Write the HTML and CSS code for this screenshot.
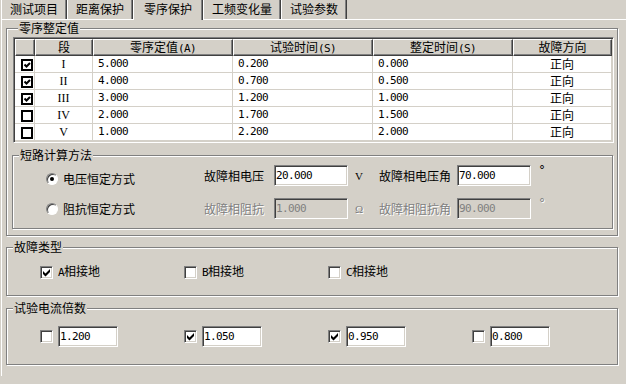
FILE: index.html
```html
<!DOCTYPE html>
<html lang="zh-CN">
<head>
    <meta charset="UTF-8">
    <title>零序保护</title>
    <link rel="stylesheet" href="styles.css">
</head>
<body>
<div class="window">
    <div class="tabs">
        <div class="tab">测试项目</div>
        <div class="tab">距离保护</div>
        <div class="tab active">零序保护</div>
        <div class="tab">工频变化量</div>
        <div class="tab">试验参数</div>
    </div>

    <div class="page">
        <div class="group zero">
            <div class="group-title">零序整定值</div>
            <div class="settings">
                <div class="th"></div>
                <div class="th">段</div>
                <div class="th">零序定值<span class="lat">(A)</span></div>
                <div class="th">试验时间<span class="lat">(S)</span></div>
                <div class="th">整定时间<span class="lat">(S)</span></div>
                <div class="th">故障方向</div>

                <div class="td c-chk"><svg class="flat" viewBox="0 0 12 12"><rect x="1" y="1" width="10" height="10"/><path d="M3.5 5.5 L5.5 7.5 L9 4"/></svg></div>
                <div class="td roman">I</div>
                <div class="td num">5.000</div>
                <div class="td num">0.200</div>
                <div class="td num">0.000</div>
                <div class="td dir">正向</div>

                <div class="td c-chk"><svg class="flat" viewBox="0 0 12 12"><rect x="1" y="1" width="10" height="10"/><path d="M3.5 5.5 L5.5 7.5 L9 4"/></svg></div>
                <div class="td roman">II</div>
                <div class="td num">4.000</div>
                <div class="td num">0.700</div>
                <div class="td num">0.500</div>
                <div class="td dir">正向</div>

                <div class="td c-chk"><svg class="flat" viewBox="0 0 12 12"><rect x="1" y="1" width="10" height="10"/><path d="M3.5 5.5 L5.5 7.5 L9 4"/></svg></div>
                <div class="td roman">III</div>
                <div class="td num">3.000</div>
                <div class="td num">1.200</div>
                <div class="td num">1.000</div>
                <div class="td dir">正向</div>

                <div class="td c-chk"><svg class="flat" viewBox="0 0 12 12"><rect x="1" y="1" width="10" height="10"/></svg></div>
                <div class="td roman">IV</div>
                <div class="td num">2.000</div>
                <div class="td num">1.700</div>
                <div class="td num">1.500</div>
                <div class="td dir">正向</div>

                <div class="td c-chk"><svg class="flat" viewBox="0 0 12 12"><rect x="1" y="1" width="10" height="10"/></svg></div>
                <div class="td roman">V</div>
                <div class="td num">1.000</div>
                <div class="td num">2.200</div>
                <div class="td num">2.000</div>
                <div class="td dir">正向</div>
            </div>

            <div class="group method">
                <div class="group-title">短路计算方法</div>
                <div class="method-body">
                    <div class="radios">
                        <div class="radio-item"><span class="radio on"></span>电压恒定方式</div>
                        <div class="radio-item"><span class="radio"></span>阻抗恒定方式</div>
                    </div>
                    <div class="params">
                        <div class="label">故障相电压</div>
                        <div class="input">20.000</div>
                        <div class="unit">V</div>
                        <div class="label">故障相电压角</div>
                        <div class="input">70.000</div>
                        <div class="deg">°</div>

                        <div class="label disabled">故障相阻抗</div>
                        <div class="input disabled">1.000</div>
                        <div class="unit disabled">Ω</div>
                        <div class="label disabled">故障相阻抗角</div>
                        <div class="input disabled">90.000</div>
                        <div class="deg disabled">°</div>
                    </div>
                </div>
            </div>
        </div>

        <div class="group fault">
            <div class="group-title">故障类型</div>
            <div class="fault-items">
                <div class="item"><span class="cb"><svg viewBox="0 0 9 9"><polygon points="1,3 3.5,5.5 8,1 8,4 3.5,8.5 1,6"/></svg></span><span><span class="lat">A</span>相接地</span></div>
                <div class="item"><span class="cb"></span><span><span class="lat">B</span>相接地</span></div>
                <div class="item"><span class="cb"></span><span><span class="lat">C</span>相接地</span></div>
            </div>
        </div>

        <div class="group mult">
            <div class="group-title">试验电流倍数</div>
            <div class="mult-items">
                <div class="item"><span class="cb"></span><div class="input short">1.200</div></div>
                <div class="item"><span class="cb"><svg viewBox="0 0 9 9"><polygon points="1,3 3.5,5.5 8,1 8,4 3.5,8.5 1,6"/></svg></span><div class="input short">1.050</div></div>
                <div class="item"><span class="cb"><svg viewBox="0 0 9 9"><polygon points="1,3 3.5,5.5 8,1 8,4 3.5,8.5 1,6"/></svg></span><div class="input short">0.950</div></div>
                <div class="item"><span class="cb"></span><div class="input short">0.800</div></div>
            </div>
        </div>
    </div>
</div>
</body>
</html>
```

FILE: styles.css
```css
body {
    margin: 0;
    width: 626px;
    height: 384px;
    overflow: hidden;
    background-color: #d4d0c8;
    color: #000;
    font-family: "Noto Sans CJK SC", sans-serif;
    font-size: 12px;
}
.window {
    padding-left: 1px;
}

/* tab strip */
.tabs {
    display: flex;
    height: 19px;
}
.tab {
    padding: 0 8px;
    line-height: 18px;
    border-left: 1px solid #fff;
    border-right: 1px solid #404040;
    box-shadow: inset -1px 0 #808080;
}
.tab.active {
    position: relative;
    z-index: 1;
    height: 20px;
    margin-bottom: -1px;
    padding: 0 10px;
    background-color: #d4d0c8;
}
.page {
    height: 357px;
    box-sizing: border-box;
    padding: 8px 0 0 4px;
    border-top: 1px solid #fff;
    border-left: 1px solid #fff;
}

/* etched group boxes */
.group {
    box-sizing: border-box;
    border: 1px solid #808080;
    box-shadow: inset 1px 1px #fff, 1px 1px #fff;
}
.group-title {
    width: max-content;
    margin: -8px 0 0 6px;
    padding: 0 1px;
    line-height: 14px;
    background-color: #d4d0c8;
}
.lat {
    font-family: "DejaVu Sans Mono", monospace;
    font-size: 11px;
    letter-spacing: -0.6px;
}
.zero {
    width: 612px;
    padding: 0 0 6px 5px;
}

/* settings grid */
.settings {
    display: grid;
    grid-template-columns: 20px 58px 140px 140px 140px 99px;
    width: 601px;
    box-sizing: border-box;
    margin: 2px 0 0 1px;
    padding: 1px;
    border: 1px solid;
    border-color: #808080 #fff #fff #808080;
    box-shadow: inset 1px 1px #404040, inset -1px -1px #d4d0c8;
    background-color: #fff;
}
.th {
    height: 17px;
    box-sizing: border-box;
    border: 1px solid;
    border-color: #fff #404040 #404040 #fff;
    box-shadow: inset -1px -1px #808080;
    background-color: #d4d0c8;
    text-align: center;
    line-height: 14px;
}
.td {
    height: 17px;
    box-sizing: border-box;
    border-right: 1px solid #d4d0c8;
    border-bottom: 1px solid #d4d0c8;
    background-color: #fff;
    line-height: 16px;
    white-space: nowrap;
}
.c-chk {
    padding: 3px 0 0 6px;
}
.flat {
    display: block;
    width: 12px;
    height: 12px;
}
.flat rect {
    fill: #fff;
    stroke: #000;
    stroke-width: 2;
}
.flat path {
    fill: none;
    stroke: #000;
    stroke-width: 2;
}
.roman {
    font-family: "Liberation Serif", serif;
    text-align: center;
}
.num {
    padding-left: 5px;
    font-family: "DejaVu Sans Mono", monospace;
    font-size: 11px;
    letter-spacing: -0.6px;
}
.dir {
    text-align: center;
}

/* short circuit method */
.method {
    width: 601px;
    margin-top: 12px;
    padding-bottom: 9px;
}
.method-body {
    display: flex;
    align-items: flex-start;
}
.radios {
    display: flex;
    flex-direction: column;
    gap: 16px;
    width: 191px;
    box-sizing: border-box;
    padding: 10px 0 0 33px;
}
.radio-item {
    display: flex;
    align-items: center;
    gap: 5px;
    height: 14px;
    line-height: 14px;
}
.radio {
    display: flex;
    align-items: center;
    justify-content: center;
    width: 12px;
    height: 12px;
    box-sizing: border-box;
    border: 1px solid;
    border-color: #808080 #fff #fff #808080;
    border-radius: 50%;
    box-shadow: inset 1px 1px #404040;
    background-color: #fff;
}
.radio.on::after {
    content: "";
    width: 4px;
    height: 4px;
    border-radius: 50%;
    background-color: #000;
}
.params {
    display: grid;
    grid-template-columns: 70px 74px 31px 78px 74px 20px;
    row-gap: 12px;
    align-items: center;
    padding-top: 3px;
}
.label {
    line-height: 14px;
}
.input {
    height: 21px;
    box-sizing: border-box;
    padding: 0 1px;
    border: 1px solid;
    border-color: #808080 #fff #fff #808080;
    box-shadow: inset 1px 1px #404040, inset -1px -1px #d4d0c8;
    background-color: #fff;
    font-family: "DejaVu Sans Mono", monospace;
    font-size: 11px;
    letter-spacing: -0.6px;
    line-height: 19px;
}
.input.disabled {
    background-color: #d4d0c8;
    color: #808080;
}
.unit {
    padding-left: 7px;
    font-family: "Liberation Serif", serif;
    font-size: 11px;
}
.deg {
    align-self: start;
    padding-left: 8px;
    font-family: "DejaVu Sans", sans-serif;
    line-height: 10px;
}
.disabled {
    color: #808080;
}
.label.disabled,
.unit.disabled,
.deg.disabled {
    text-shadow: 1px 1px #fff;
}

/* fault type and current multiple */
.fault {
    width: 612px;
    margin-top: 11px;
    padding-bottom: 15px;
}
.fault-items {
    display: grid;
    grid-template-columns: repeat(3, 144px);
    padding: 10px 0 0 33px;
}
.mult {
    width: 612px;
    margin-top: 12px;
    padding-bottom: 17px;
}
.mult-items {
    display: grid;
    grid-template-columns: repeat(4, 144px);
    padding: 11px 0 0 33px;
}
.item {
    display: flex;
    align-items: center;
    gap: 5px;
    line-height: 14px;
}
.cb {
    width: 13px;
    height: 13px;
    box-sizing: border-box;
    padding: 1px;
    border: 1px solid;
    border-color: #808080 #fff #fff #808080;
    box-shadow: inset 1px 1px #404040, inset -1px -1px #d4d0c8;
    background-color: #fff;
}
.cb svg {
    display: block;
    width: 9px;
    height: 9px;
    fill: #000;
}
.input.short {
    width: 60px;
}
```
